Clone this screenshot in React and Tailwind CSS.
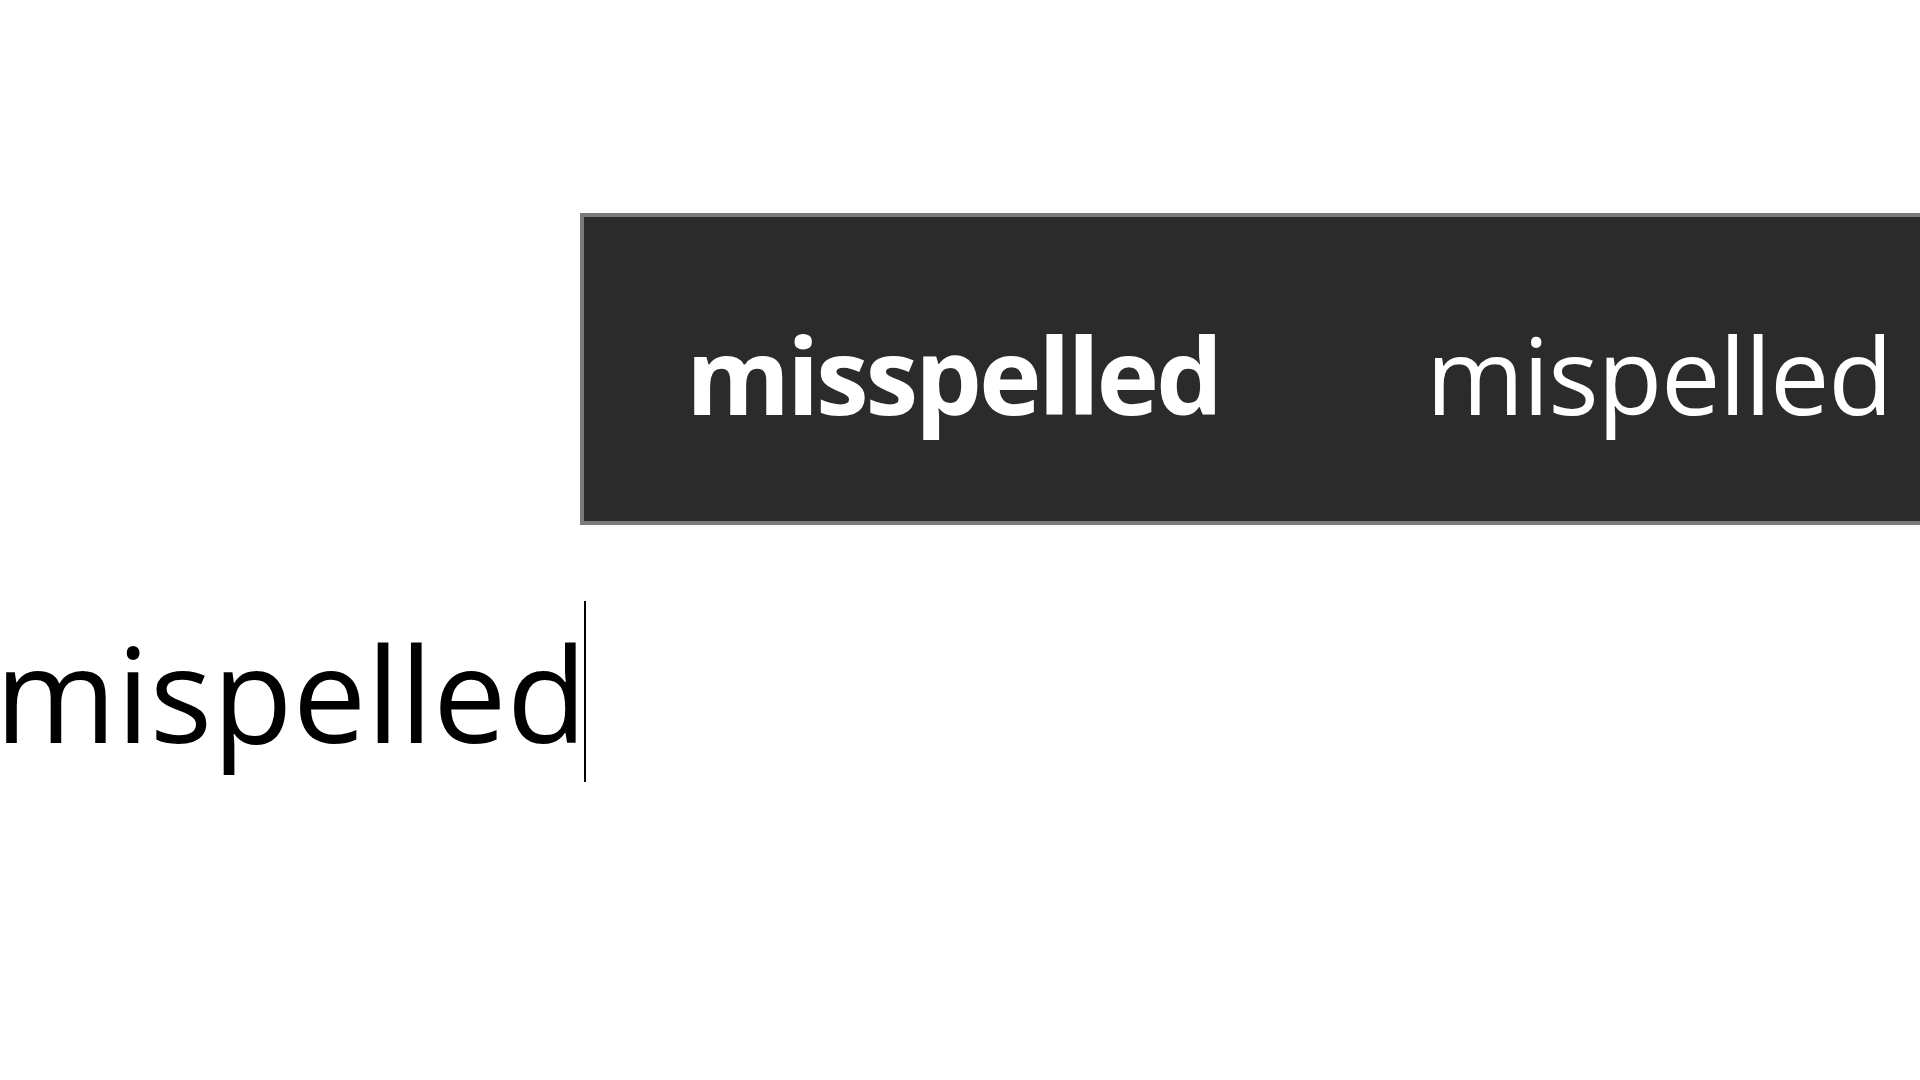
export default function App() {
  return (
    <div className="w-[1920px] h-[1080px] bg-white overflow-hidden flex flex-col" style={{ fontFamily: '"Open Sans", "Noto Sans", sans-serif' }}>
      <div className="mt-[213px] ml-[580px] w-[1400px] h-[312px] shrink-0 bg-[#2b2b2b] border-4 border-r-0 border-[#7a7a7a] flex items-start pt-[104px] pl-[102px] text-white text-[106px] leading-none">
        <span className="font-bold tracking-[-3.2px]">misspelled</span>
        <span className="ml-[206px] tracking-[-1.3px]">mispelled</span>
      </div>
      <div className="mt-[76px] flex items-start">
        <span className="-ml-[5px] mt-[26px] text-black text-[131px] leading-none tracking-[0.2px]">mispelled</span>
        <span className="-ml-[3px] w-[2px] h-[181px] bg-black"></span>
      </div>
    </div>
  );
}
